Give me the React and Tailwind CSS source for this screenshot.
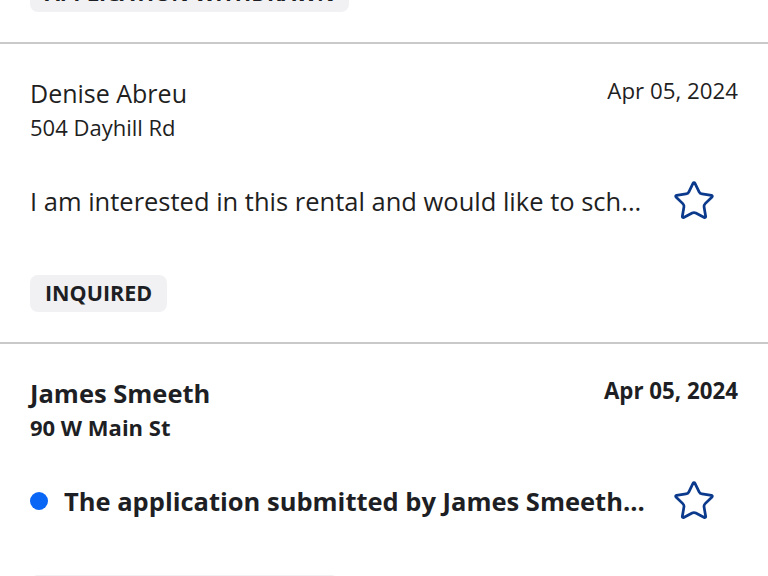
import React from "react";
import { Star } from "lucide-react";

const messages = [
  {
    id: 1,
    name: "Denise Abreu",
    address: "504 Dayhill Rd",
    date: "Apr 05, 2024",
    text: "I am interested in this rental and would like to schedule a showing at your earliest convenience.",
    cut: 52,
    status: "INQUIRED",
    unread: false,
  },
  {
    id: 2,
    name: "James Smeeth",
    address: "90 W Main St",
    date: "Apr 05, 2024",
    text: "The application submitted by James Smeeth has been received and is ready for review.",
    cut: 41,
    status: "APPLICATION COMPLETED",
    unread: true,
  },
];

const preview = (text, cut) => (text.length > cut ? text.slice(0, cut).trimEnd() + "..." : text);

const Badge = ({ label }) => (
  <span className="inline-flex h-[37px] items-center rounded-lg bg-[#f1f1f3] px-[15px] text-[21.5px] font-bold text-[#1e1f24]">
    {label}
  </span>
);

const MessageRow = ({ item }) => {
  const weight = item.unread ? "font-bold text-[#1e1f24]" : "font-normal text-[#1f1f1f]";

  return (
    <div className="border-b-2 border-[#c9c9c9] px-[30px] pt-[31px] pb-[30px]">
      <div className="flex items-start justify-between">
        <div className="flex flex-col">
          <span className={`leading-[36px] ${item.unread ? "text-[25.5px]" : "text-[25px]"} ${weight}`}>
            {item.name}
          </span>
          <span className={`text-[22px] leading-[32px] ${weight}`}>{item.address}</span>
        </div>
        <span className={`text-[22.3px] leading-[32px] ${weight}`}>{item.date}</span>
      </div>

      <div className="mt-[36px] flex h-[44px] items-center">
        {item.unread && (
          <span className="mr-[16px] h-[18px] w-[18px] shrink-0 rounded-full bg-[#0a66f5]" />
        )}
        <p className={`min-w-0 flex-1 truncate text-[25.5px] leading-[36px] ${weight}`}>
          {preview(item.text, item.cut)}
        </p>
        <button className="ml-[16px] mr-[22px] flex h-[44px] w-[44px] shrink-0 items-center justify-center">
          <Star size={46} strokeWidth={1.5} className="text-[#0b3a8c]" />
        </button>
      </div>

      <div className="mt-[52px]">
        <Badge label={item.status} />
      </div>
    </div>
  );
};

export default function App() {
  return (
    <div
      className="h-[576px] w-[768px] overflow-hidden bg-white"
      style={{ fontFamily: '"Open Sans", "Noto Sans", sans-serif' }}
    >
      <div className="-mt-[25px] border-b-2 border-[#c9c9c9] px-[30px] pb-[30px]">
        <Badge label="APPLICATION WITHDRAWN" />
      </div>
      {messages.map((m) => (
        <MessageRow key={m.id} item={m} />
      ))}
    </div>
  );
}
